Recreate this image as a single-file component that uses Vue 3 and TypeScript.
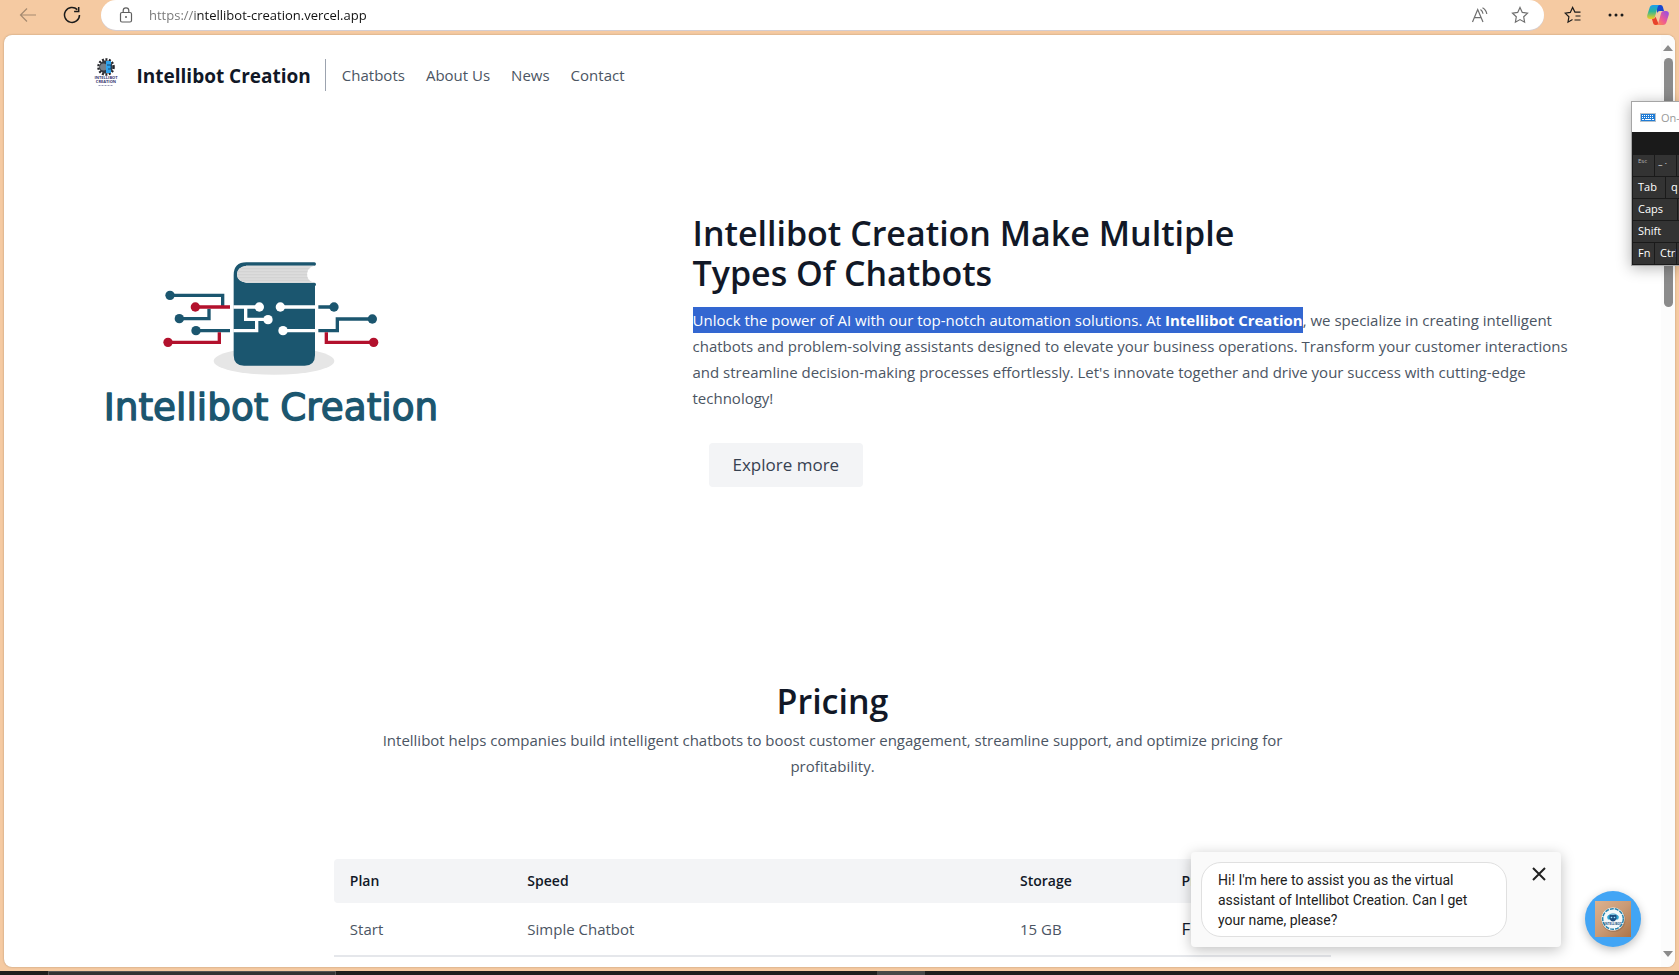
<script setup lang="ts">
import { ref } from 'vue'

interface Plan {
  name: string
  speed: string
  storage: string
  price: string
}

const links: string[] = ['Chatbots', 'About Us', 'News', 'Contact']
const plans: Plan[] = [{ name: 'Start', speed: 'Simple Chatbot', storage: '15 GB', price: 'Free' }]
const keyRows: string[][] = [['Tab', 'q'], ['Caps', ''], ['Shift'], ['Fn', 'Ctrl', '']]
const address = ref('https://intellibot-creation.vercel.app')
const chatOpen = ref(true)
</script>

<template>
  <div class="browser">
    <div class="toolbar">
      <button class="tool back" aria-label="Back">
        <svg width="18" height="16" viewBox="0 0 18 16"><path d="M17 8H1.5M8 1.5 1.5 8 8 14.5" /></svg>
      </button>
      <button class="tool reload" aria-label="Refresh">
        <svg width="18" height="18" viewBox="0 0 18 18"><path d="M14.3 3.6A7.5 7.5 0 1 0 16.5 9M15.7 1v4.6h-4.6" /></svg>
      </button>
      <div class="address">
        <svg class="lock" width="14" height="16" viewBox="0 0 14 16">
          <rect x="1.5" y="5.5" width="11" height="9.5" rx="1.5" /><path d="M4.2 5.500V3.600a2.800 2.800 0 0 1 5.600 0v1.900" />
          <circle cx="7" cy="10" r="1" class="dot" />
        </svg>
        <input v-model="address" class="url" type="text" aria-label="Address" spellcheck="false" />
        <button class="tool" aria-label="Read aloud">
          <svg width="18" height="18" viewBox="0 0 18 18"><path d="M1.500 16 6.700 3.500 12 16M3.300 11.600H10.200M9.500 3.400a6 6 0 0 1 2.500 4.300M11.500 1.800A8.500 8.500 0 0 1 15.800 8" /></svg>
        </button>
        <button class="tool" aria-label="Add to favorites">
          <svg width="18" height="18" viewBox="0 0 18 18"><path d="m9 1.500 2.300 4.900 5.200.7-3.800 3.700.9 5.400L9 13.600l-4.600 2.600.9-5.400L1.500 7.100l5.200-.7z" /></svg>
        </button>
      </div>
      <button class="tool dark" aria-label="Favorites">
        <svg width="18" height="18" viewBox="0 0 18 18"><path d="M8.500 13.600 4 16.200l.9-5.400L1.200 7.100l5.100-.7L8.600 1.500l2.300 4.600H16.500M11.500 10H16.500M10.500 14H16.500" /></svg>
      </button>
      <button class="tool dark" aria-label="Settings and more">
        <svg width="18" height="18" viewBox="0 0 18 18"><g class="solid"><circle cx="3" cy="9" r="1.500" /><circle cx="9" cy="9" r="1.500" /><circle cx="15" cy="9" r="1.500" /></g></svg>
      </button>
      <button class="tool copilot" aria-label="Copilot">
        <svg width="22" height="20" viewBox="0 0 22 20">
          <defs>
            <linearGradient id="cpA" x1="0" y1="0" x2="0" y2="1"><stop offset="0" stop-color="#1b9df0" /><stop offset=".45" stop-color="#2bb59a" /><stop offset="1" stop-color="#f4cf1a" /></linearGradient>
            <linearGradient id="cpB" x1="1" y1="0" x2="0" y2="1"><stop offset="0" stop-color="#8a4cf0" /><stop offset=".55" stop-color="#ee5a93" /><stop offset="1" stop-color="#ff9440" /></linearGradient>
          </defs>
          <g class="fill">
            <path fill="#1a48cf" d="M10 0h3.500c1.400 0 2 .8 2.400 2L17 6h-4c-2 0-2.500 1-3 2.500z" />
            <path fill="url(#cpA)" d="M6 0h7c-1.300 0-1.900.8-2.300 2L8 11.500C7.500 13.300 6.500 14 5 14H3c-2.200 0-3.300-1.500-2.700-4L2.500 3C3 1 4.200 0 6 0z" />
            <path fill="#e8432c" d="M12 20H8.500c-1.400 0-2-.8-2.400-2L5 14c2 0 3-.7 3.500-2.500z" />
            <path fill="url(#cpB)" d="M16 20H9c1.300 0 1.900-.8 2.300-2L14 8.500C14.500 6.700 15.500 6 17 6h2c2.200 0 3.300 1.500 2.700 4l-2.200 7c-.5 2-1.700 3-3.500 3z" />
          </g>
        </svg>
      </button>
    </div>

    <div class="viewport">
      <div class="page">
        <header class="container site-header">
          <svg class="brand-logo" width="40" height="40" viewBox="0 0 40 40" aria-hidden="true">
            <circle cx="21" cy="12" r="7.600" fill="none" stroke="#25262b" stroke-width="2.400" stroke-dasharray="2 1.500" />
            <circle cx="21" cy="12" r="6.800" fill="#34383f" />
            <circle cx="18.500" cy="12" r="3.500" fill="#75808a" />
            <path d="M21 6h5v12h-5z" fill="#2ea3ee" /><path d="M22 10h4v4h-3" fill="none" stroke="#15436b" />
            <text x="21" y="24" text-anchor="middle" class="logo-name">INTELLIBOT</text>
            <text x="21" y="28" text-anchor="middle" class="logo-name">CREATION</text>
            <path d="M13.500 30.500h15" stroke="#9a9cb8" stroke-dasharray="2 1" />
          </svg>
          <a href="#" class="brand">Intellibot Creation</a>
          <nav class="nav"><a v-for="link in links" :key="link" href="#">{{ link }}</a></nav>
        </header>

        <section class="container hero">
          <div class="hero-art">
            <svg width="370" height="200" viewBox="14 27 1110 600" role="img" aria-label="Intellibot Creation">
              <ellipse cx="581" cy="363" rx="181" ry="41" fill="#e6e6e6" />
              <path d="M460 105q0-38 38-38H702q5 0 5 5t-5 5H498q-28 5-28 26t28 25H702q5 0 5 5t-3 5V346q0 31-31 31H491q-31 0-31-31z" fill="#1b566f" />
              <path d="M498 77H702q-22 5-22 26t22 25H498q-28-3-28-25t28-26z" fill="#dcdcdc" />
              <path d="M480 86H688M473 95H682M471 104H681M474 113H682M482 121H688" stroke="#cdcdcd" stroke-width="2" />
              <g fill="none" stroke-width="10">
                <g stroke="#1b566f"><path d="M268 166H427V198M297 236H386V206M347 272H449M714 201H760M714 272H771V237H876" /></g>
                <g stroke="#b3112d"><path d="M345 201H449M263 307H417V277M738 277V307H880" /></g>
                <g stroke="#fff"><path d="M459 201H537M496 201V238H563M459 272H529V238M600 201H706M608 272H706" /></g>
              </g>
              <g fill="#1b566f"><circle cx="269" cy="166" r="14" /><circle cx="297" cy="236" r="14" /><circle cx="347" cy="272" r="14" /><circle cx="761" cy="201" r="14" /><circle cx="876" cy="237" r="14" /></g>
              <g fill="#b3112d"><circle cx="345" cy="201" r="14" /><circle cx="263" cy="307" r="14" /><circle cx="880" cy="307" r="14" /></g>
              <g fill="#fff"><circle cx="537" cy="201" r="14" /><circle cx="563" cy="239" r="14" /><circle cx="600" cy="201" r="14" /><circle cx="608" cy="272" r="14" /></g>
              <text x="572" y="540" text-anchor="middle" class="wordmark">Intellibot Creation</text>
            </svg>
          </div>
          <div class="hero-copy">
            <h1>Intellibot Creation Make Multiple<br />Types Of Chatbots</h1>
            <p>
              <mark>Unlock the power of AI with our top-notch automation solutions. At <strong>Intellibot Creation</strong></mark>, we specialize in creating intelligent chatbots and problem-solving assistants designed to elevate your business operations. Transform your customer interactions and streamline decision-making processes effortlessly. Let's innovate together and drive your success with cutting-edge technology!
            </p>
            <button class="explore">Explore more</button>
          </div>
        </section>

        <section class="container pricing">
          <h2>Pricing</h2>
          <p>Intellibot helps companies build intelligent chatbots to boost customer engagement, streamline support, and optimize pricing for profitability.</p>
          <table>
            <thead>
              <tr><th class="c-plan">Plan</th><th class="c-speed">Speed</th><th class="c-storage">Storage</th><th>Price</th></tr>
            </thead>
            <tbody>
              <tr v-for="plan in plans" :key="plan.name">
                <td>{{ plan.name }}</td><td>{{ plan.speed }}</td><td>{{ plan.storage }}</td><td class="price">{{ plan.price }}</td>
              </tr>
            </tbody>
          </table>
        </section>
      </div>

      <div class="scrollbar" aria-hidden="true">
        <svg width="10" height="6" viewBox="0 0 10 6"><path d="M5 0 10 6H0z" /></svg>
        <div class="thumb"></div>
        <svg width="10" height="6" viewBox="0 0 10 6"><path d="M5 6 0 0h10z" /></svg>
      </div>

      <div class="chat">
        <div v-if="chatOpen" class="chat-card">
          <p>Hi! I'm here to assist you as the virtual assistant of Intellibot Creation. Can I get your name, please?</p>
          <button aria-label="Close" @click="chatOpen = false">
            <svg width="14" height="14" viewBox="0 0 14 14"><path d="M1 1l12 12M13 1 1 13" /></svg>
          </button>
        </div>
        <button class="chat-fab" aria-label="Open chat">
          <svg width="36" height="36" viewBox="0 0 36 36">
            <defs><linearGradient id="wood" x1="0" y1="0" x2="1" y2="1"><stop offset="0" stop-color="#dcb28f" /><stop offset=".5" stop-color="#c99a75" /><stop offset="1" stop-color="#ad7448" /></linearGradient></defs>
            <path fill="url(#wood)" d="M0 0h36v36H0z" />
            <circle cx="18.500" cy="19" r="12" fill="#8d6a50" opacity=".5" />
            <circle cx="18" cy="18" r="11.500" fill="#f3f8fa" />
            <circle cx="18" cy="18" r="10.300" fill="none" stroke="#2884ad" stroke-width="1.500" stroke-dasharray="4 1" />
            <path d="M13 17q0-4 5-4t5 4" fill="none" stroke="#2a93c4" />
            <rect x="12.500" y="14.500" width="3" height="4" rx="1" fill="#2fa5d4" /><rect x="20.500" y="14.500" width="3" height="4" rx="1" fill="#2fa5d4" />
            <path d="M14.500 14h7v4q-1.500 2.500-3.500 2.500T14.500 18z" fill="#1c4f82" />
            <circle cx="16.500" cy="16.500" r=".8" fill="#9fe1ff" /><circle cx="19.500" cy="16.500" r=".8" fill="#9fe1ff" />
            <text x="18" y="24" text-anchor="middle" class="badge-name">INTELLIBOT</text>
          </svg>
        </button>
      </div>
    </div>

    <div class="taskbar"><span class="task-search"></span><span class="task-active"></span></div>

    <div class="osk">
      <div class="osk-title">
        <svg width="16" height="9" viewBox="0 0 16 9"><path d="M0 0h16v9H0z" fill="#b9c3cc" /><path d="M1 1h14v7H1z" fill="#1f7cd6" /><path d="M2 2.500h12M2 4.500h12" stroke="#fff" stroke-dasharray="1 1" /><path d="M2 6.500h2M5 6.500h6M12 6.500h2" stroke="#fff" /></svg>
        <span>On-Screen Keyboard</span>
      </div>
      <div class="osk-keys">
        <div class="osk-row"><button class="key small">Esc</button><button class="key tilde">~ `</button><button class="key"></button></div>
        <div v-for="(row, i) in keyRows" :key="i" class="osk-row">
          <button v-for="(label, j) in row" :key="j" class="key" :class="'k-' + label.toLowerCase()">{{ label }}</button>
        </div>
      </div>
    </div>
  </div>
</template>

<style>
body {
  margin: 0;
  overflow: hidden;
}
</style>

<style scoped>
.browser,
.browser * {
  box-sizing: border-box;
}
.browser {
  position: relative;
  display: flex;
  flex-direction: column;
  height: 100vh;
  overflow: hidden;
  background: #f5caa2;
  color: #4b5563;
  font: 15px/26px "Open Sans", "Noto Sans", sans-serif;
}
button {
  padding: 0;
  border: 0;
  background: none;
  color: inherit;
  font: inherit;
}
a {
  color: inherit;
  text-decoration: none;
}
svg {
  display: block;
  flex: none;
}
h1, h2, p {
  margin: 0;
}

/* Browser toolbar */
.toolbar {
  display: flex;
  align-items: center;
  height: 30px;
  margin-bottom: 5px;
  padding: 0 10px 0 19px;
}
.tool svg {
  fill: none;
  stroke: #6f6f6f;
  stroke-width: 1.2;
}
.tool .fill {
  stroke: none;
}
.tool .solid {
  fill: #1b1b1b;
  stroke: none;
}
.back svg {
  stroke: #a58a70;
}
.reload {
  margin: 0 20px 0 26px;
}
.reload svg,
.dark svg {
  stroke: #1b1b1b;
}
.reload svg {
  stroke-width: 1.5;
}
.address {
  display: flex;
  flex: 1;
  align-items: center;
  gap: 22px;
  height: 30px;
  margin-right: 20px;
  padding: 0 15px 0 18px;
  border-radius: 15px;
  background: #fff;
  box-shadow: 0 1px 0 #d5cdd0;
}
.lock {
  fill: none;
  stroke: #5f5f5f;
  stroke-width: 1.2;
}
.lock .dot {
  fill: #5f5f5f;
  stroke: none;
}
.url {
  flex: 1;
  min-width: 0;
  height: 24px;
  margin-left: -6px;
  padding: 0;
  border: 0;
  outline: 0;
  background: linear-gradient(90deg, #757575 46px, #111 46px);
  background-clip: text;
  -webkit-background-clip: text;
  color: transparent;
  font: 13px/24px "Open Sans", "Noto Sans", sans-serif;
}
.dark {
  margin-right: 25px;
}
.copilot {
  margin-left: -3px;
}

/* Page area */
.viewport {
  position: relative;
  display: flex;
  flex: 1;
  min-height: 0;
  margin: 0 4px 4px;
  overflow: hidden;
  border-radius: 8px;
  background: #fff;
  box-shadow: 0 0 2px #b48f6c;
}
.page {
  flex: 1;
  min-width: 0;
  overflow: hidden;
}
.container {
  max-width: 1536px;
  margin: 0 auto;
  padding: 96px 20px;
}
.site-header {
  display: flex;
  align-items: center;
  height: 80px;
  padding: 0 20px;
}
.logo-name {
  fill: #34346d;
  font: 700 4px "Open Sans", sans-serif;
}
.brand {
  margin: 0 14px 0 12px;
  padding-top: 2px;
  color: #111827;
  font-size: 19px;
  font-weight: 700;
}
.nav {
  display: flex;
  gap: 21px;
  padding: 3px 16px;
  border-left: 1px solid #9ca3af;
}
.hero {
  display: flex;
  align-items: center;
}
.hero-art {
  flex: 1 1 512px;
  max-width: 512px;
}
.wordmark {
  fill: #1b566f;
  stroke: #1b566f;
  stroke-width: 4;
  stroke-linejoin: round;
  font: 112px "DejaVu Sans", sans-serif;
}
.hero-copy {
  flex: 1 1 792px;
  padding-left: 96px;
}
h1, h2 {
  padding-top: 2px;
  color: #111827;
  font-size: 34px;
  font-weight: 600;
  line-height: 40px;
}
h1 {
  margin-bottom: 14px;
}
mark {
  padding: 3px 0;
  background: #3367d1;
  color: #fff;
}
strong {
  font-weight: 700;
}
.explore {
  display: block;
  margin: 32px 0 0 16px;
  padding: 8px 24px;
  border-radius: 4px;
  background: #f3f4f6;
  color: #374151;
  font-size: 17px;
  line-height: 28px;
}

/* Pricing */
.pricing h2 {
  margin-bottom: 6px;
  text-align: center;
}
.pricing p {
  max-width: 997px;
  margin: 0 auto 80px;
  padding: 0 36px;
  text-align: center;
}
table {
  width: 66.666%;
  margin: 0 auto;
  border-collapse: separate;
  border-spacing: 0;
  table-layout: fixed;
  text-align: left;
}
.c-plan { width: 17.8%; }
.c-speed { width: 49.4%; }
.c-storage { width: 16.2%; }
th {
  padding: 12px 16px;
  background: #f3f4f6;
  color: #111827;
  font-size: 14px;
  font-weight: 600;
  line-height: 20px;
}
th:first-child {
  border-radius: 4px 0 0 4px;
}
td {
  padding: 13px 16px;
  border-bottom: 2px solid #e5e7eb;
}
.price {
  color: #111827;
  font-size: 17px;
}

/* Scrollbar */
.scrollbar {
  display: flex;
  flex-direction: column;
  align-items: center;
  width: 14px;
  padding: 10px 0;
  background: #fcfcfc;
}
.scrollbar path {
  fill: #8b8b8b;
}
.thumb {
  width: 9px;
  height: 27.3%;
  margin: 7px 0 auto;
  border-radius: 5px;
  background: #8b8b8b;
}

/* Chat widget */
.chat {
  position: absolute;
  right: 34px;
  bottom: 20px;
  display: flex;
  align-items: flex-end;
  gap: 24px;
}
.chat-card {
  display: flex;
  align-items: flex-start;
  width: 370px;
  padding: 10px;
  border-radius: 4px;
  background: #fafafa;
  box-shadow: 0 3px 14px rgba(0, 0, 0, 0.25);
  color: #212121;
  font: 14px/20px Roboto, sans-serif;
}
.chat-card p {
  width: 306px;
  padding: 7px 32px 6px 16px;
  border: 1px solid #e0e0e0;
  border-radius: 20px;
  background: #fff;
}
.chat-card button {
  margin: 5px 0 0 25px;
}
.chat-card path {
  stroke: #212121;
  stroke-width: 2;
}
.chat-fab {
  display: grid;
  place-items: center;
  width: 56px;
  height: 56px;
  border-radius: 50%;
  background: #42a5f5;
  box-shadow: 0 3px 10px rgba(0, 0, 0, 0.25);
}
.badge-name {
  fill: #1c4f82;
  font: 700 3px "Open Sans", sans-serif;
}

/* Taskbar */
.taskbar {
  display: flex;
  height: 4px;
  padding-left: 48px;
  background: #1f1e1c;
}
.task-search {
  width: 288px;
  border: 1px solid #555;
  border-bottom: 0;
  background: #333;
}
.task-active {
  width: 48px;
  margin-left: 541px;
  background: #484848;
}

/* On-screen keyboard window, running off the right edge */
.osk {
  position: absolute;
  top: 101px;
  right: 0;
  width: 48px;
  overflow: hidden;
  border: 1px solid #a5a5a5;
  border-right: 0;
  background: #1a1a1a;
  box-shadow: 0 2px 14px rgba(0, 0, 0, 0.3);
  color: #fff;
  font-size: 11px;
  line-height: 19px;
}
.osk-title {
  display: flex;
  align-items: center;
  gap: 5px;
  height: 30px;
  padding-left: 8px;
  background: #fff;
  color: #999;
  white-space: nowrap;
}
.osk-keys {
  display: flex;
  flex-direction: column;
  gap: 1px;
  padding: 23px 0 1px 1px;
}
.osk-row {
  display: flex;
  gap: 1px;
}
.key {
  flex: none;
  width: 21px;
  height: 21px;
  padding: 0 0 2px 5px;
  overflow: hidden;
  background: #333;
  text-align: left;
  white-space: nowrap;
}
.small {
  padding-bottom: 9px;
  color: #bbb;
  font-size: 6px;
  line-height: 12px;
}
.tilde {
  padding-left: 3px;
  font-size: 8px;
}
.k-tab { width: 32px; }
.k-caps { width: 44px; }
.k-shift { width: 60px; }
</style>
